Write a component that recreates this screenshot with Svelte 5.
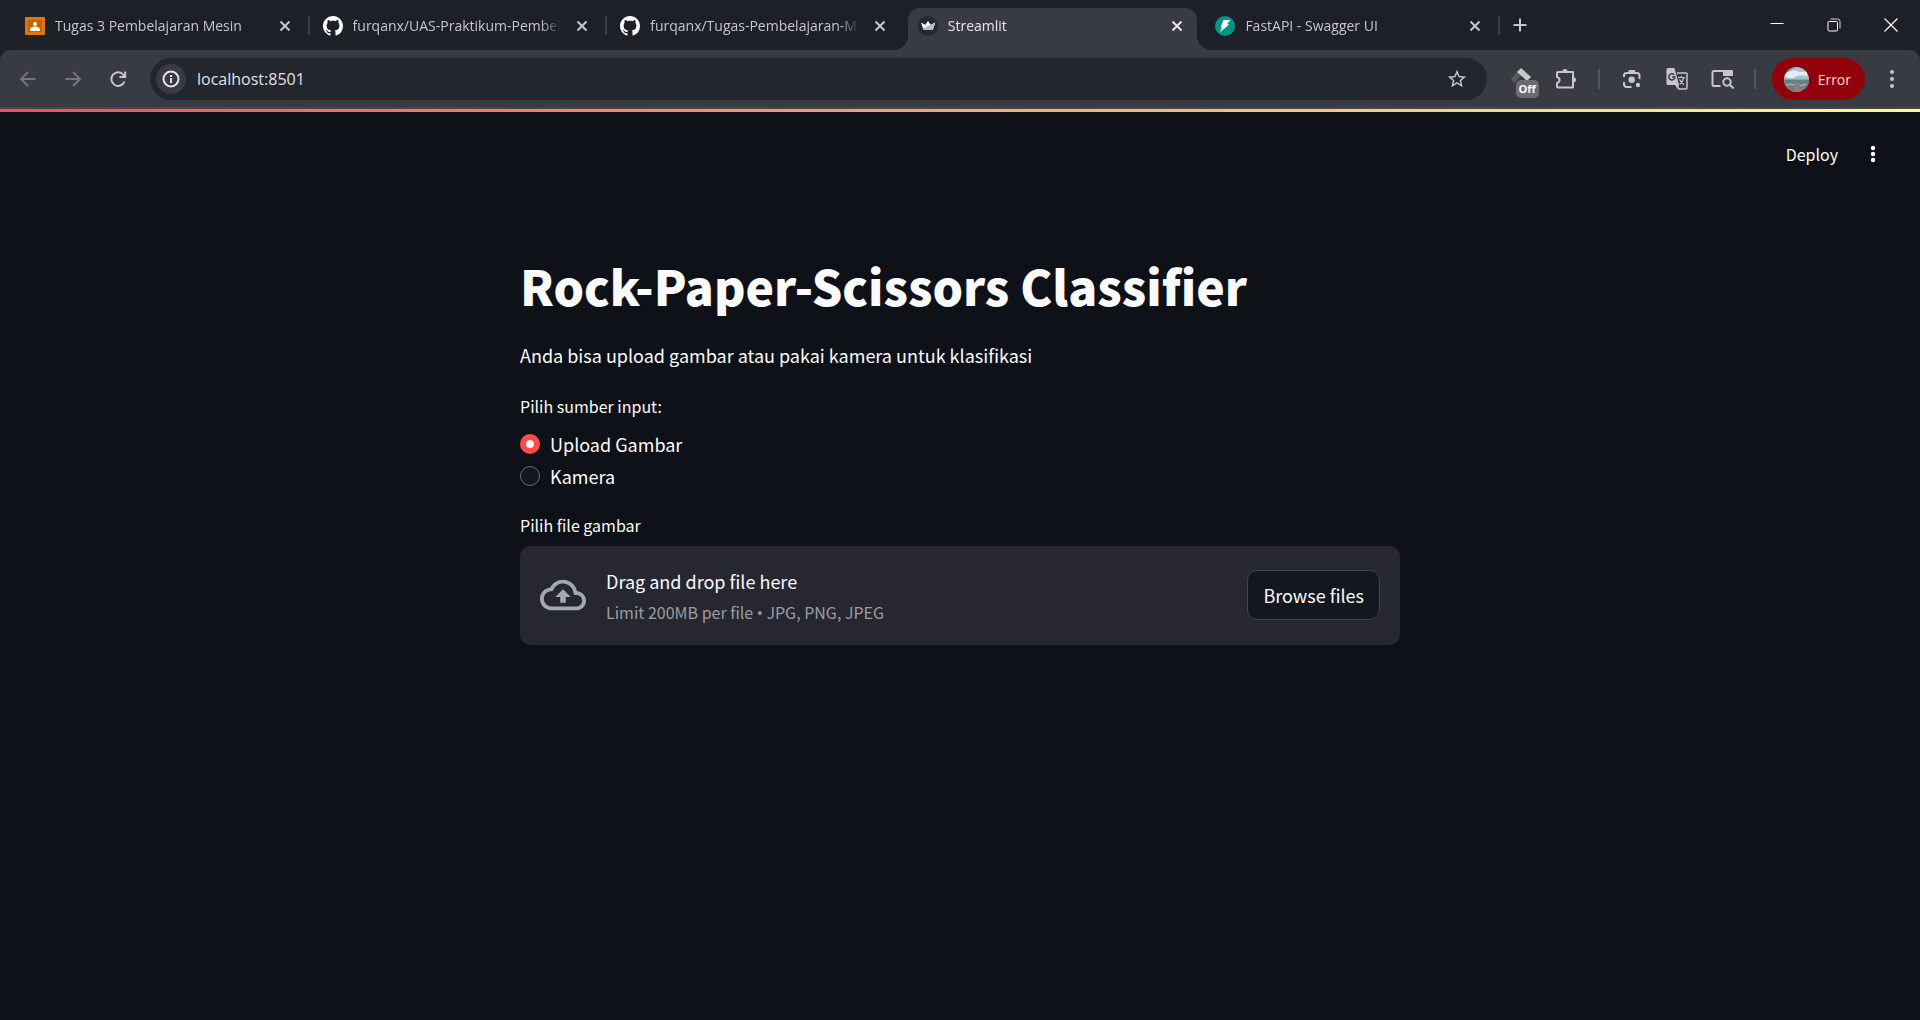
<script>
  const tabs = [
    { title: 'Tugas 3 Pembelajaran Mesin', icon: 'classroom' },
    { title: 'furqanx/UAS-Praktikum-Pembelajaran-Mesin', icon: 'github' },
    { title: 'furqanx/Tugas-Pembelajaran-Mesin', icon: 'github' },
    { title: 'Streamlit', icon: 'streamlit' },
    { title: 'FastAPI - Swagger UI', icon: 'fastapi' }
  ];
  let active = $state(3);
  let address = $state('localhost:8501');
  let source = $state('Upload Gambar');
  let picker;
</script>

{#snippet favicon(name)}
  {#if name === 'classroom'}
    <svg class="favicon" viewBox="0 0 20 20" aria-hidden="true">
      <rect y="1" width="20" height="18" rx="1" fill="#e8710a" />
      <rect x="3" y="4" width="14" height="12" fill="#c26401" />
      <circle cx="10" cy="8" r="2" fill="#fff" />
      <path d="M5 15v-1.500c0-2 3-3 5-3s5 1 5 3V15z" fill="#fff" />
    </svg>
  {:else if name === 'github'}
    <svg class="favicon" viewBox="0 0 16 16" aria-hidden="true">
      <path fill="#fff" d="M8 0C3.58 0 0 3.58 0 8c0 3.54 2.29 6.53 5.47 7.59.4.07.55-.17.55-.38 0-.19-.01-.82-.01-1.49-2.01.37-2.53-.49-2.69-.94-.09-.23-.48-.94-.82-1.13-.28-.15-.68-.52-.01-.53.63-.01 1.08.58 1.23.82.72 1.21 1.87.87 2.33.66.07-.52.28-.87.51-1.07-1.78-.2-3.64-.89-3.64-3.95 0-.87.31-1.59.82-2.15-.08-.2-.36-1.02.08-2.12 0 0 .67-.21 2.2.82.64-.18 1.32-.27 2-.27s1.36.09 2 .27c1.53-1.04 2.2-.82 2.2-.82.44 1.1.16 1.92.08 2.12.51.56.82 1.27.82 2.15 0 3.07-1.87 3.75-3.65 3.95.29.25.54.73.54 1.48 0 1.07-.01 1.93-.01 2.2 0 .21.15.46.55.38A8.01 8.01 0 0 0 16 8c0-4.42-3.58-8-8-8z" />
    </svg>
  {:else if name === 'streamlit'}
    <svg class="favicon" viewBox="0 0 20 20" aria-hidden="true">
      <circle cx="10" cy="10" r="10" fill="#262730" />
      <path d="M3 6.500l4.300 2.300L10 5l2.700 3.800L17.300 6.500 15 13.200q-.3.800-1.100.8H6.300q-.8 0-1.100-.8z" fill="#f5f5f5" />
      <path d="M5 12.200 12.700 8.800 17.300 6.500 15 13.200q-.3.800-1.100.8H6.300q-.8 0-1.100-.8z" fill="#b9b9bb" />
    </svg>
  {:else}
    <svg class="favicon" viewBox="0 0 20 20" aria-hidden="true">
      <circle cx="10" cy="10" r="10" fill="#059487" />
      <path d="M8.400 4h6.800l-3.100 4.200h2.200L5 16.300l1.800-5.100H5.700z" fill="#fff" />
    </svg>
  {/if}
{/snippet}

<div class="window">
  <header class="strip">
    <div class="tabs">
      {#each tabs as tab, i}
        <div class="slot" class:divided={i !== active && i !== active - 1}>
          <div class="tab" class:active={i === active}>
            <button class="pick" onclick={() => (active = i)}>
              {@render favicon(tab.icon)}
              <span class="title">{tab.title}</span>
            </button>
            <button class="close" aria-label={'Close ' + tab.title}>
              <svg width="12" height="12" viewBox="0 0 12 12" fill="none" stroke="currentColor" stroke-width="2"><path d="M1.500 1.500l9 9M10.500 1.500l-9 9" /></svg>
            </button>
          </div>
        </div>
      {/each}
    </div>
    <button class="new" aria-label="New tab">
      <svg width="14" height="14" viewBox="0 0 14 14" fill="none" stroke="currentColor" stroke-width="2"><path d="M7 .5v13M.5 7h13" /></svg>
    </button>
    <div class="controls">
      <button aria-label="Minimize"><svg width="14" height="14" viewBox="0 0 14 14" fill="none" stroke="#fff"><path d="M.5 5.500h13" /></svg></button>
      <button aria-label="Restore"><svg width="14" height="14" viewBox="0 0 14 14" fill="none" stroke="#fff"><rect x="1" y="3.500" width="9.500" height="9.500" rx="1.200" /><path d="M3.500 1h7.200q2.300 0 2.300 2.300v7.200" stroke="#d0d0d2" /></svg></button>
      <button aria-label="Close window"><svg width="14" height="14" viewBox="0 0 14 14" fill="none" stroke="#fff" stroke-width="1.200"><path d="M.5.5l13 13M13.500.5l-13 13" /></svg></button>
    </div>
  </header>

  <nav class="toolbar" aria-label="Browser toolbar">
    <div class="history">
      <button class="dim" aria-label="Back"><svg width="20" height="20" viewBox="0 0 20 20" fill="none" stroke="currentColor" stroke-width="2"><path d="M17.500 10H4M10 3l-7 7 7 7" /></svg></button>
      <button class="dim" aria-label="Forward"><svg width="20" height="20" viewBox="0 0 20 20" fill="none" stroke="currentColor" stroke-width="2"><path d="M2.500 10H16M10 3l7 7-7 7" /></svg></button>
      <button aria-label="Reload"><svg width="20" height="20" viewBox="0 0 20 20" fill="none" stroke="currentColor" stroke-width="2"><path d="M16.500 12.500A6.800 6.800 0 1 1 15.500 6L17 7.500M17.200 2.500v5.500h-5.700" /></svg></button>
    </div>
    <div class="address">
      <button class="info" aria-label="Site information">
        <svg width="18" height="18" viewBox="0 0 18 18" fill="none" stroke="#e3e3e6" stroke-width="2"><circle cx="9" cy="9" r="7.500" /><path d="M9 8v5M9 5v2" /></svg>
      </button>
      <input type="text" aria-label="Address" bind:value={address} />
      <button class="star" aria-label="Bookmark this page">
        <svg width="22" height="22" viewBox="0 0 24 24" fill="currentColor"><path d="M22 9.240l-7.190-.62L12 2 9.190 8.630 2 9.240l5.460 4.730L5.820 21 12 17.270 18.180 21l-1.630-7.030L22 9.240zM12 15.400l-3.760 2.270 1-4.280-3.320-2.880 4.380-.38L12 6.100l1.710 4.040 4.380.38-3.320 2.880 1 4.280L12 15.400z" /></svg>
      </button>
    </div>
    <div class="tools">
      <button class="ext" aria-label="Extension, off">
        <svg width="22" height="22" viewBox="0 0 22 22"><path d="M1 11 8 3l4 4-8 8z" fill="#5c5b59" /><path d="M7 4l4-4 10 9-4 4z" fill="#c8c8c8" /></svg>
        <span class="badge">Off</span>
      </button>
      <button aria-label="Extensions">
        <svg width="24" height="24" viewBox="0 0 24 24" fill="none" stroke="currentColor" stroke-width="2"><path d="M4 5h15v15.500H4q-1 0-1-1V16q2.600-.8 2.600-3T3 10V6q0-1 1-1z" stroke-linejoin="round" /><path d="M8.500 4.500a2.500 2.500 0 0 1 5 0zM19.500 10.300a2.500 2.500 0 0 1 0 5z" fill="currentColor" stroke="none" /></svg>
      </button>
      <span class="rule"></span>
      <button aria-label="Search with Lens">
        <svg width="22" height="22" viewBox="0 0 22 22" fill="none" stroke="currentColor" stroke-width="2"><path d="M3 9V7.500Q3 5 5.500 5h10.500q2.500 0 2.500 2.500V11M3 14v2q0 3 3 3h4.500" /><path d="M6.500 5h8.500l-1.500-3h-5.500z" fill="currentColor" stroke="none" /><circle cx="10.700" cy="11.700" r="3.200" fill="currentColor" stroke="none" /><circle cx="17" cy="17" r="2.200" fill="currentColor" stroke="none" /></svg>
      </button>
      <button aria-label="Translate">
        <svg width="22" height="22" viewBox="0 0 22 22" fill="none"><path d="M11 5h9q1 0 1 1v14q0 1-1 1H13l-3-4" stroke="currentColor" stroke-width="1.500" /><path d="M2 0h6.500L13 17H2q-1.500 0-1.500-1.500v-14Q.5 0 2 0z" fill="currentColor" /><path d="M9.500 17h3.500l-1.500 4z" fill="currentColor" /><path d="M8.300 6.800A3.100 3.100 0 1 0 9 9H6" stroke="#393b43" stroke-width="1.500" /><path d="M12 9.500h7M15.300 8v1.500M17.800 9.500q-1 4-4 6.500M13.500 11.500q1.500 3 4.500 5" stroke="currentColor" stroke-width="1.200" /></svg>
      </button>
      <button aria-label="Search side panel">
        <svg width="24" height="22" viewBox="0 0 24 22" fill="none" stroke="currentColor" stroke-width="2"><path d="M10.500 18H4q-1.500 0-1.500-1.500v-12Q2.500 3 4 3h17.500v5" /><path d="M13 2h8.500q1.500 0 1.500 1.500V8H13z" fill="currentColor" stroke="none" /><circle cx="17" cy="14" r="3.700" /><path d="M19.500 16.500l4 4" /></svg>
      </button>
      <span class="rule"></span>
      <button class="profile">
        <svg width="25" height="25" viewBox="0 0 25 25" aria-hidden="true">
          <defs>
            <clipPath id="round"><circle cx="12.500" cy="12.500" r="12.500" /></clipPath>
          </defs>
          <g clip-path="url(#round)">
            <path d="M0 0h25v25H0z" fill="#a9c3d6" />
            <path d="M0 0h12L4 5H0z" fill="#6f9cc4" />
            <path d="M3 6q5-4 10-2t10 0v5q-8-2-12 1T0 9z" fill="#e7ecef" />
            <path d="M0 12.500h25V18H0z" fill="#5f8288" />
            <path d="M0 17h25v8H0z" fill="#747c80" />
            <path d="M2 18q4-2 8 0t12-1" stroke="#b5c6c9" fill="none" />
            <path d="M10 25v-6q0-4 3-4t3 4l1 6z" fill="#8d7f7c" />
          </g>
        </svg>
        <span>Error</span>
      </button>
      <button class="more" aria-label="Browser menu">
        <svg width="6" height="20" viewBox="0 0 6 20" fill="currentColor"><circle cx="3" cy="3" r="2" /><circle cx="3" cy="10" r="2" /><circle cx="3" cy="17" r="2" /></svg>
      </button>
    </div>
  </nav>

  <div class="decoration"></div>

  <div class="app">
    <div class="actions">
      <button class="deploy">Deploy</button>
      <button class="menu" aria-label="Main menu">
        <svg width="6" height="20" viewBox="0 0 6 20" fill="currentColor"><circle cx="3" cy="4" r="2.200" /><circle cx="3" cy="10" r="2.200" /><circle cx="3" cy="16" r="2.200" /></svg>
      </button>
    </div>

    <main>
      <h1>Rock-Paper-Scissors Classifier</h1>
      <p>Anda bisa upload gambar atau pakai kamera untuk klasifikasi</p>

      <fieldset>
        <legend>Pilih sumber input:</legend>
        {#each ['Upload Gambar', 'Kamera'] as option}
          <label class="option">
            <input type="radio" name="source" value={option} bind:group={source} />
            {option}
          </label>
        {/each}
      </fieldset>

      <label class="caption" for="picture">Pilih file gambar</label>
      <section class="dropzone">
        <svg class="cloud" viewBox="0 0 24 24" fill="currentColor" aria-hidden="true"><path d="M19.350 10.040C18.670 6.590 15.640 4 12 4 9.110 4 6.600 5.640 5.350 8.040 2.340 8.360 0 10.910 0 14c0 3.310 2.690 6 6 6h13c2.760 0 5-2.240 5-5 0-2.640-2.050-4.780-4.650-4.960zM19 18H6c-2.210 0-4-1.790-4-4 0-2.050 1.530-3.760 3.560-3.970l1.070-.11.5-.95A5.469 5.469 0 0 1 12 6c2.620 0 4.880 1.860 5.390 4.430l.3 1.500 1.530.11A2.980 2.980 0 0 1 22 15c0 1.650-1.350 3-3 3zM8 13h2.550v3h2.900v-3H16l-4-4z" /></svg>
        <div class="hint">
          <div class="lead">Drag and drop file here</div>
          <small>Limit 200MB per file <span class="bullet">•</span> JPG, PNG, JPEG</small>
        </div>
        <input id="picture" type="file" accept=".jpg,.png,.jpeg" hidden bind:this={picker} />
        <button class="browse" onclick={() => picker.click()}>Browse files</button>
      </section>
    </main>
  </div>
</div>

<style>
  :global(body) {
    background: #0e1117;
  }
  .window {
    min-height: 100vh;
    display: flex;
    flex-direction: column;
    background: #0e1117;
    font-family: 'Open Sans', 'Noto Sans', sans-serif;
    color: #c5c6d0;
  }
  button {
    display: flex;
    align-items: center;
    justify-content: center;
    flex: none;
    padding: 0;
    border: 0;
    background: none;
    font: inherit;
    color: inherit;
    cursor: pointer;
  }
  svg {
    flex: none;
  }

  .strip {
    display: flex;
    height: 50px;
    padding: 0 1px 0 10px;
    background: #1d2027;
  }
  .tabs {
    display: flex;
    flex: 0 1 1488px;
    min-width: 0;
  }
  .slot {
    flex: 1;
    min-width: 0;
    position: relative;
    padding: 8px 3px 0 5px;
  }
  .divided::after {
    content: '';
    position: absolute;
    right: -2px;
    top: 15px;
    width: 2px;
    height: 20px;
    border-radius: 1px;
    background: #3b3d45;
  }
  .tab {
    display: flex;
    align-items: center;
    gap: 11px;
    height: 42px;
    padding: 0 10px 7px 10px;
    box-sizing: border-box;
    position: relative;
    border-radius: 12px 12px 0 0;
  }
  .active {
    background: #393b43;
    color: #e6e7eb;
  }
  .active::before,
  .active::after {
    content: '';
    position: absolute;
    bottom: 0;
    width: 14px;
    height: 14px;
  }
  .active::before {
    right: 100%;
    background: radial-gradient(circle at 0 0, transparent 14px, #393b43 14px);
  }
  .active::after {
    left: 100%;
    background: radial-gradient(circle at 100% 0, transparent 14px, #393b43 14px);
  }
  .pick {
    flex: 1;
    min-width: 0;
    gap: 10px;
    justify-content: flex-start;
  }
  .favicon {
    width: 20px;
    height: 20px;
  }
  .title {
    flex: 1;
    overflow: hidden;
    white-space: nowrap;
    text-align: left;
    font-size: 14px;
    line-height: 20px;
    mask-image: linear-gradient(to left, transparent, #000 20px);
  }
  .close {
    width: 20px;
    height: 20px;
  }
  .new {
    width: 44px;
  }
  .controls {
    display: flex;
    margin-left: auto;
  }
  .controls button {
    width: 57px;
  }

  .toolbar {
    display: flex;
    align-items: center;
    height: 59px;
    box-sizing: border-box;
    padding: 1px 15px 0 5px;
    border-bottom: 2px solid #45474e;
    border-radius: 10px 10px 0 0;
    background: #393b43;
    box-shadow: 0 -10px 0 #1d2027;
  }
  .history {
    display: flex;
  }
  .history button {
    width: 45px;
    height: 42px;
  }
  .dim {
    color: #74757c;
  }
  .address {
    flex: 1;
    display: flex;
    align-items: center;
    gap: 11px;
    height: 42px;
    box-sizing: border-box;
    margin-left: 10px;
    padding: 0 19px 0 6px;
    border-radius: 21px;
    background: #24262e;
  }
  .info {
    width: 30px;
    height: 30px;
    border-radius: 50%;
    background: #393b43;
  }
  .address input {
    flex: 1;
    min-width: 0;
    padding: 0;
    border: 0;
    outline: 0;
    background: none;
    font: inherit;
    font-size: 16px;
    line-height: 24px;
    color: #e0e1e6;
  }
  .tools {
    display: flex;
    align-items: center;
    padding-left: 12px;
  }
  .tools button {
    width: 45px;
    height: 42px;
  }
  .ext {
    position: relative;
  }
  .badge {
    position: absolute;
    left: 17px;
    top: 22px;
    width: 23px;
    border-radius: 5px;
    background: #6b6c6d;
    color: #fff;
    font-size: 11px;
    font-weight: 700;
    line-height: 18px;
    text-align: center;
  }
  .rule {
    width: 2px;
    height: 20px;
    margin: 0 10px 0 9px;
    background: #54565d;
  }
  .tools .profile {
    width: auto;
    gap: 9px;
    margin-left: 6px;
    padding: 0 14px 0 12px;
    border-radius: 21px;
    background: #92000a;
    color: #f9dedc;
    font-size: 14px;
  }
  .tools .more {
    width: 26px;
    margin-left: 14px;
  }

  .decoration {
    height: 3px;
    background: linear-gradient(90deg, #ff4b4b, #fffd80);
  }

  .app {
    flex: 1;
    font-family: 'Noto Sans CJK SC', sans-serif;
    font-size: 18px;
    color: #fafafa;
  }
  .actions {
    display: flex;
    justify-content: flex-end;
    align-items: center;
    gap: 32px;
    height: 84px;
    padding-right: 44px;
  }
  .deploy {
    font-size: 16px;
    line-height: 24px;
  }
  main {
    max-width: 880px;
    margin: 0 auto;
    padding: 56px 20px 60px;
  }
  h1 {
    margin: 0;
    font-size: 48px;
    line-height: 66px;
    font-weight: 900;
  }
  p {
    margin: 21px 0 23px;
    line-height: 32px;
  }
  fieldset {
    margin: 0 0 21px;
    padding: 0;
    border: 0;
  }
  legend {
    padding: 0 0 10px;
    font-size: 16px;
    line-height: 24px;
  }
  .option {
    display: flex;
    align-items: center;
    gap: 10px;
    width: fit-content;
    line-height: 32px;
  }
  .option input {
    appearance: none;
    width: 20px;
    height: 20px;
    margin: 0;
    border: 1px solid #6b6d73;
    border-radius: 50%;
    background: #131720;
  }
  .option input:checked {
    border: 6px solid #ff4b4b;
    background: #f5f5fa;
  }
  .caption {
    display: block;
    margin-bottom: 9px;
    font-size: 16px;
    line-height: 24px;
  }
  .dropzone {
    display: flex;
    align-items: center;
    gap: 20px;
    padding: 19px 20px 20px;
    border-radius: 10px;
    background: #262730;
  }
  .cloud {
    width: 46px;
    height: 46px;
    color: #a3a8b8;
  }
  .hint {
    flex: 1;
    display: flex;
    flex-direction: column;
    gap: 2px;
  }
  .lead {
    line-height: 32px;
  }
  .hint small {
    font-size: 16px;
    line-height: 26px;
    color: #9c9da1;
  }
  .bullet {
    font-family: 'Open Sans', sans-serif;
    line-height: 20px;
  }
  .browse {
    height: 50px;
    padding: 0 15px;
    border: 1px solid #41444c;
    border-radius: 10px;
    background: #131720;
  }
</style>
